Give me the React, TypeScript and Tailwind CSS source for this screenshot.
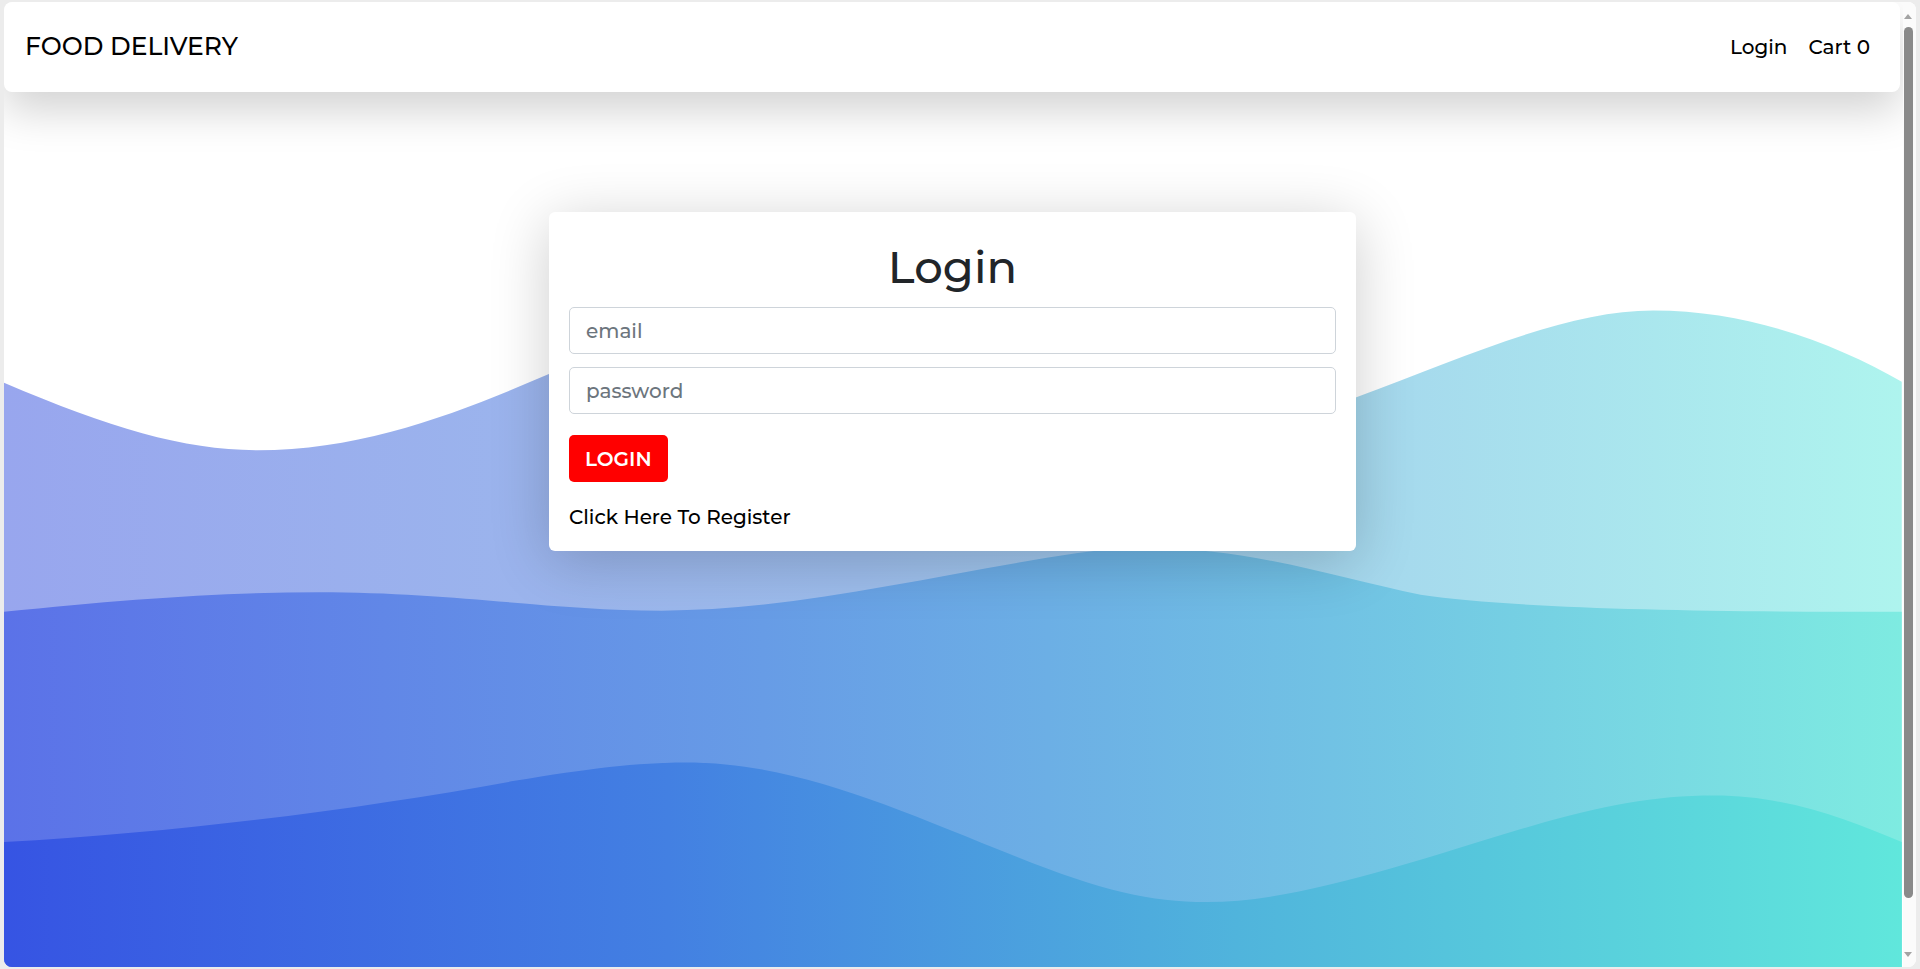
const font = "font-['Montserrat','DejaVu_Sans',sans-serif]";

const Waves: React.FC = () => (
  <svg
    className="absolute inset-0 h-full w-full"
    viewBox="3 2 1551 788"
    preserveAspectRatio="none"
  >
    <defs>
      <linearGradient id="w1" x1="0" y1="0" x2="1" y2="0">
        <stop offset="0" stopColor="#98a6ee" />
        <stop offset="0.45" stopColor="#9dbdec" />
        <stop offset="1" stopColor="#aef4ee" />
      </linearGradient>
      <linearGradient id="w2" x1="0" y1="0" x2="1" y2="0">
        <stop offset="0" stopColor="#5b72e8" />
        <stop offset="0.4" stopColor="#679ce6" />
        <stop offset="0.7" stopColor="#71c2e4" />
        <stop offset="1" stopColor="#7eebe1" />
      </linearGradient>
      <linearGradient id="w3" x1="0" y1="0" x2="1" y2="0">
        <stop offset="0" stopColor="#3654e3" />
        <stop offset="0.35" stopColor="#4380e2" />
        <stop offset="0.65" stopColor="#50b4dc" />
        <stop offset="1" stopColor="#60e7dc" />
      </linearGradient>
    </defs>
    <path
      fill="url(#w1)"
      d="M3 313 C 90 350, 150 368, 210 368 C 300 368, 380 335, 450 305 C 600 245, 850 420, 1107 325 C 1200 290, 1280 254, 1350 254 C 1430 254, 1500 282, 1553 312 L 1553 792 L 3 792 Z"
    />
    <path
      fill="url(#w2)"
      d="M3 500 C 100 490, 180 484, 260 484 C 370 484, 450 499, 540 499 C 650 499, 760 470, 880 452 C 990 436, 1080 470, 1160 486 C 1240 498, 1400 500, 1553 500 L 1553 792 L 3 792 Z"
    />
    <path
      fill="url(#w3)"
      d="M3 688 C 150 680, 300 660, 420 638 C 480 628, 520 623, 560 623 C 650 623, 730 660, 830 700 C 900 728, 940 737, 985 737 C 1060 737, 1150 705, 1250 675 C 1310 658, 1350 650, 1400 650 C 1460 650, 1510 670, 1553 688 L 1553 792 L 3 792 Z"
    />
  </svg>
);

const Navbar: React.FC = () => (
  <nav className="relative z-10 mr-[3px] flex h-[90px] items-center justify-between rounded-lg bg-white pl-[21px] pr-[30px] shadow-[0_18px_44px_rgba(0,0,0,0.18)]">
    <span className="text-[25px] font-medium text-black">FOOD DELIVERY</span>
    <div className="flex items-center gap-[21px] text-[20px] font-medium text-black">
      <a href="#">Login</a>
      <a href="#">Cart 0</a>
    </div>
  </nav>
);

const LoginCard: React.FC = () => (
  <div className="relative z-10 w-[807px] rounded-[6px] bg-white px-[20px] pb-[19px] pt-[25px] shadow-[0_10px_60px_rgba(0,0,0,0.2)]">
    <h1 className="mb-[10px] text-center text-[45px] font-medium leading-[60px] text-[#212529]">
      Login
    </h1>
    <input
      type="text"
      placeholder="email"
      className="mb-[13px] block h-[47px] w-full rounded-[5px] border border-[#ced4da] px-[16px] text-[20px] font-medium text-[#212529] outline-none placeholder:text-[#6c757d]"
    />
    <input
      type="password"
      placeholder="password"
      className="block h-[47px] w-full rounded-[5px] border border-[#ced4da] px-[16px] text-[20px] font-medium text-[#212529] outline-none placeholder:text-[#6c757d]"
    />
    <button className="mt-[21px] h-[47px] rounded-[5px] bg-[#ff0000] px-[16px] text-[20px] font-semibold text-white">
      LOGIN
    </button>
    <div className="mt-[20px] text-[20px] font-medium leading-[30px] text-black">
      Click Here To Register
    </div>
  </div>
);

const Scrollbar: React.FC = () => (
  <div className="flex w-[13px] flex-col items-start bg-[#fbfbfb]">
    <div className="ml-[1px] mt-[12px] h-0 w-0 border-x-[4.5px] border-b-[5px] border-x-transparent border-b-[#a3a3a3]" />
    <div className="ml-[1px] mt-[8px] h-[871px] w-[9px] rounded-full bg-[#8a8a8a]" />
    <div className="flex-1" />
    <div className="mb-[10px] ml-[1px] h-0 w-0 border-x-[4.5px] border-t-[5px] border-x-transparent border-t-[#a3a3a3]" />
  </div>
);

export default function App() {
  return (
    <div className={`h-screen bg-[#ececec] px-[4px] py-[2px] ${font}`}>
      <div className="flex h-full overflow-hidden rounded-[8px] bg-white">
        <div className="relative flex-1 overflow-hidden">
          <Waves />
          <Navbar />
          <div className="flex justify-center pr-[2px] pt-[120px]">
            <LoginCard />
          </div>
        </div>
        <Scrollbar />
      </div>
    </div>
  );
}
